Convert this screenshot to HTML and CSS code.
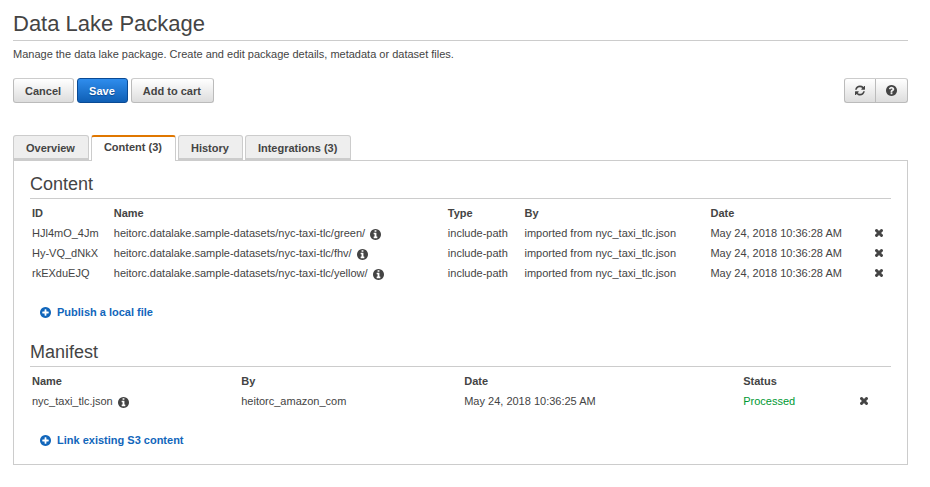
FILE: index.html
```html
<!DOCTYPE html>
<html lang="en">
<head>
<meta charset="utf-8">
<title>Data Lake Package</title>
<link rel="stylesheet" href="styles.css">
</head>
<body>
<svg class="sprite" aria-hidden="true">
  <symbol id="times" viewBox="302 238 1188 1188"><path d="M1490 1322q0 40-28 68l-136 136q-28 28-68 28t-68-28l-294-294-294 294q-28 28-68 28t-68-28l-136-136q-28-28-28-68t28-68l294-294-294-294q-28-28-28-68t28-68l136-136q28-28 68-28t68 28l294 294 294-294q28-28 68-28t68 28l136 136q28 28 28 68t-28 68l-294 294 294 294q28 28 28 68z" transform="translate(0 -128)" stroke="currentColor" stroke-width="70"/></symbol>
  <symbol id="plus" viewBox="128 128 1536 1536"><path d="M1344 960v-128q0-26-19-45t-45-19h-256v-256q0-26-19-45t-45-19h-128q-26 0-45 19t-19 45v256h-256q-26 0-45 19t-19 45v128q0 26 19 45t45 19h256v256q0 26 19 45t45 19h128q26 0 45-19t19-45v-256h256q26 0 45-19t19-45zm320-64q0 209-103 385.5t-279.5 279.5-385.5 103-385.5-103-279.5-279.5-103-385.5 103-385.5 279.5-279.5 385.5-103 385.5 103 279.5 279.5 103 385.5z"/></symbol>
  <symbol id="info" viewBox="128 128 1536 1536"><path d="M1152 1376v-160q0-14-9-23t-23-9h-96v-512q0-14-9-23t-23-9h-320q-14 0-23 9t-9 23v160q0 14 9 23t23 9h96v320h-96q-14 0-23 9t-9 23v160q0 14 9 23t23 9h448q14 0 23-9t9-23zm-128-896v-160q0-14-9-23t-23-9h-192q-14 0-23 9t-9 23v160q0 14 9 23t23 9h192q14 0 23-9t9-23zm640 416q0 209-103 385.5t-279.5 279.5-385.5 103-385.5-103-279.5-279.5-103-385.5 103-385.5 279.5-279.5 385.5-103 385.5 103 279.5 279.5 103 385.5z"/></symbol>
  <symbol id="question" viewBox="128 128 1536 1536"><path d="M1024 1376v-192q0-14-9-23t-23-9h-192q-14 0-23 9t-9 23v192q0 14 9 23t23 9h192q14 0 23-9t9-23zm256-672q0-88-55.5-163t-138.5-116-170-41q-243 0-371 213-15 24 8 42l132 100q7 6 19 6 16 0 25-12 53-68 86-92 34-24 86-24 48 0 85.5 26t37.5 59q0 38-20 61t-68 45q-63 28-115.5 86.5t-52.5 125.5v36q0 14 9 23t23 9h192q14 0 23-9t9-23q0-19 21.5-49.5t54.5-49.5q32-18 49-28.5t46-35 44.5-48 28-60.5 12.5-81zm384 192q0 209-103 385.5t-279.5 279.5-385.5 103-385.5-103-279.5-279.5-103-385.5 103-385.5 279.5-279.5 385.5-103 385.5 103 279.5 279.5 103 385.5z"/></symbol>
  <symbol id="refresh" viewBox="128 128 1536 1536"><path d="M1639 1056q0 5-1 7-64 268-268 434.5t-478 166.5q-146 0-282.5-55t-243.5-157l-129 129q-19 19-45 19t-45-19-19-45v-448q0-26 19-45t45-19h448q26 0 45 19t19 45-19 45l-137 137q71 66 161 102t187 36q134 0 250-65t186-179q11-17 53-117 8-23 30-23h192q13 0 22.5 9.5t9.5 22.5zm25-800v448q0 26-19 45t-45 19h-448q-26 0-45-19t-19-45 19-45l138-138q-148-137-349-137-134 0-250 65t-186 179q-11 17-53 117-8 23-30 23h-199q-13 0-22.5-9.5t-9.5-22.5v-7q65-268 270-434.5t480-166.5q146 0 284 55.5t245 156.5l130-129q19-19 45-19t45 19 19 45z"/></symbol>
</svg>
<main class="page">
  <h1 class="title">Data Lake Package</h1>
  <p class="intro">Manage the data lake package. Create and edit package details, metadata or dataset files.</p>

  <div class="toolbar">
    <div class="actions">
      <button class="btn" type="button">Cancel</button>
      <button class="btn primary" type="button">Save</button>
      <button class="btn" type="button">Add to cart</button>
    </div>
    <div class="group">
      <button class="btn tool" type="button" aria-label="Refresh"><svg class="icon"><use href="#refresh"/></svg></button>
      <button class="btn tool" type="button" aria-label="Help"><svg class="icon"><use href="#question"/></svg></button>
    </div>
  </div>

  <nav class="tabs">
    <a class="tab" href="#overview">Overview</a>
    <a class="tab active" href="#content" aria-current="page">Content (3)</a>
    <a class="tab" href="#history">History</a>
    <a class="tab" href="#integrations">Integrations (3)</a>
  </nav>

  <div class="panel">
    <section>
      <h2 class="heading">Content</h2>
      <table class="table">
        <colgroup><col class="c-id"><col class="c-name"><col class="c-type"><col class="c-by"><col class="c-date"><col></colgroup>
        <thead><tr><th>ID</th><th>Name</th><th>Type</th><th>By</th><th>Date</th><td></td></tr></thead>
        <tbody>
          <tr><td>HJl4mO_4Jm</td><td>heitorc.datalake.sample-datasets/nyc-taxi-tlc/green/<svg class="icon info"><use href="#info"/></svg></td><td>include-path</td><td>imported from nyc_taxi_tlc.json</td><td>May 24, 2018 10:36:28 AM</td><td><button class="remove" type="button" aria-label="Remove"><svg class="cross"><use href="#times"/></svg></button></td></tr>
          <tr><td>Hy-VQ_dNkX</td><td>heitorc.datalake.sample-datasets/nyc-taxi-tlc/fhv/<svg class="icon info"><use href="#info"/></svg></td><td>include-path</td><td>imported from nyc_taxi_tlc.json</td><td>May 24, 2018 10:36:28 AM</td><td><button class="remove" type="button" aria-label="Remove"><svg class="cross"><use href="#times"/></svg></button></td></tr>
          <tr><td>rkEXduEJQ</td><td>heitorc.datalake.sample-datasets/nyc-taxi-tlc/yellow/<svg class="icon info"><use href="#info"/></svg></td><td>include-path</td><td>imported from nyc_taxi_tlc.json</td><td>May 24, 2018 10:36:28 AM</td><td><button class="remove" type="button" aria-label="Remove"><svg class="cross"><use href="#times"/></svg></button></td></tr>
        </tbody>
      </table>
      <a class="add" href="#publish"><svg class="icon"><use href="#plus"/></svg>Publish a local file</a>
    </section>
    <section>
      <h2 class="heading">Manifest</h2>
      <table class="table">
        <colgroup><col class="m-name"><col class="m-by"><col class="m-date"><col class="m-status"><col></colgroup>
        <thead><tr><th>Name</th><th>By</th><th>Date</th><th>Status</th><td></td></tr></thead>
        <tbody>
          <tr><td>nyc_taxi_tlc.json<svg class="icon info"><use href="#info"/></svg></td><td>heitorc_amazon_com</td><td>May 24, 2018 10:36:25 AM</td><td class="ok">Processed</td><td><button class="remove" type="button" aria-label="Remove"><svg class="cross"><use href="#times"/></svg></button></td></tr>
        </tbody>
      </table>
      <a class="add" href="#link"><svg class="icon"><use href="#plus"/></svg>Link existing S3 content</a>
    </section>
  </div>
</main>
</body>
</html>
```
FILE: styles.css
```css
* { box-sizing: border-box; }
body {
  margin: 0;
  background: #fff;
  color: #444;
  font: 11px/20px "Helvetica Neue", "Liberation Sans", Arial, sans-serif;
}
.sprite { display: none; }
.page { padding: 8px 22px 20px 13px; }
h1, h2, p { margin: 0; font-weight: 400; }
.title {
  font-size: 22px;
  line-height: 32px;
  border-bottom: 1px solid #ccc;
}
.intro { padding: 3px 0 14px; }

.icon { width: 11px; height: 11px; fill: currentColor; }
.toolbar { display: flex; justify-content: space-between; }
.actions { display: flex; gap: 3px; }
.group { display: flex; }
.btn {
  height: 25px;
  padding: 0 12px 0 11px;
  border: 1px solid #bbb;
  border-top-color: #ccc;
  border-radius: 3px;
  background: linear-gradient(#fff, #ddd);
  color: #444;
  font: bold 11px/20px "Helvetica Neue", "Liberation Sans", Arial, sans-serif;
}
.primary {
  border-color: #0a4a94;
  background: linear-gradient(#2f8ded, #0f5fb5);
  color: #fff;
  text-shadow: 0 1px 1px #0a4a94;
}
.tool { display: flex; align-items: center; width: 31px; padding: 0 10px; }
.tool:first-child { border-right: 0; border-radius: 3px 0 0 3px; }
.tool:last-child { width: 33px; border-radius: 0 3px 3px 0; }

.tabs { display: flex; gap: 2px; margin-top: 32px; }
.tab {
  height: 25px;
  padding: 2px 13px 0 12px;
  border: 1px solid #ccc;
  border-bottom-width: 2px;
  border-radius: 3px 3px 0 0;
  background: #eee;
  color: #444;
  font-weight: bold;
  text-decoration: none;
}
.active {
  height: 26px;
  margin-bottom: -1px;
  padding-top: 0;
  border-top: 2px solid #e07700;
  border-bottom: 0;
  background: #fff;
  z-index: 1;
}
.panel { padding: 10px 16px 14px; border: 1px solid #ccc; }
.heading {
  font-size: 18px;
  line-height: 27px;
  border-bottom: 1px solid #ccc;
  margin-bottom: 4px;
}
.table { width: 100%; table-layout: fixed; border-collapse: collapse; }
.table th, .table td {
  height: 20px;
  padding: 0 2px;
  text-align: left;
  white-space: nowrap;
}
.c-id { width: 9.5%; }
.c-name { width: 38.8%; }
.c-type { width: 8.9%; }
.c-by { width: 21.6%; }
.c-date { width: 19.1%; }
.m-name { width: 24.3%; }
.m-by { width: 25.9%; }
.m-date { width: 32.4%; }
.m-status { width: 13.6%; }
.info { margin-left: 5px; vertical-align: -3px; }
.ok { color: #093; }
.remove {
  display: block;
  padding: 0;
  border: 0;
  background: none;
  color: #444;
}
.cross { display: block; width: 8px; height: 8px; fill: currentColor; }
.add {
  display: flex;
  align-items: center;
  gap: 6px;
  width: max-content;
  margin: 19px 0 17px 10px;
  color: #1166bb;
  font-weight: bold;
  text-decoration: none;
}
.panel section:last-child .add { margin-bottom: 0; }
```
